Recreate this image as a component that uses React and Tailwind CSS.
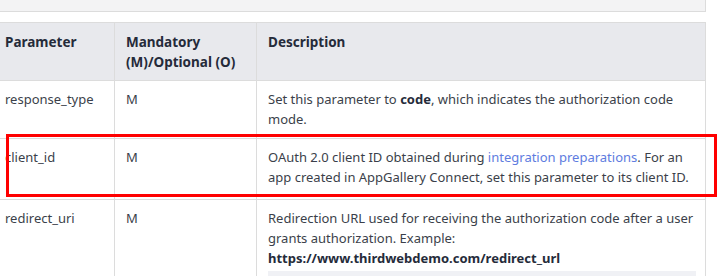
import React from "react";

const rows = [
  {
    name: "response_type",
    req: "M",
    desc: (
      <>
        <div>
          Set this parameter to <b className="font-bold text-[#252b3a]">code</b>, which indicates the authorization code
        </div>
        <div>mode.</div>
      </>
    ),
    pad: "pt-[8px] pb-[9px]",
  },
  {
    name: "client_id",
    req: "M",
    desc: (
      <>
        <div>
          OAuth 2.0 client ID obtained during{" "}
          <span className="text-[#5e7ce0]">integration preparations</span>. For an
        </div>
        <div>app created in AppGallery Connect, set this parameter to its client ID.</div>
      </>
    ),
    pad: "pt-[8px] pb-[12px]",
  },
  {
    name: "redirect_uri",
    req: "M",
    desc: (
      <>
        <div>Redirection URL used for receiving the authorization code after a user</div>
        <div>grants authorization. Example:</div>
        <div className="font-bold text-[#252b3a]">https://www.thirdwebdemo.com/redirect_url</div>
        <div className="mt-[3px] h-[30px] bg-[#f0f1f5] w-[428px]"></div>
      </>
    ),
    pad: "pt-[8px] pb-0",
  },
];

export default function App() {
  return (
    <div
      className="relative w-[722px] h-[276px] overflow-hidden bg-white text-[13px] leading-[20px] text-[#3b3f4a]"
      style={{ fontFamily: '"Noto Sans", "Open Sans", sans-serif' }}
    >
      <div className="ml-[-7px] w-[713px] h-[12px] bg-[#f3f3f4] border-b border-r border-[#dcdcdc]"></div>
      <div className="h-[10px]"></div>
      <div className="ml-[-7px] w-[713px] border-t border-r border-[#dcdcdc]">
        <div className="grid grid-cols-[122px_142px_449px] bg-[#e8e9ed] border-b border-[#dcdcdc] font-bold text-[#252b3a] text-[13.5px]">
          <div className="pl-[12px] pt-[9px] pb-[7px] h-[57px] border-r border-[#dcdcdc]">Parameter</div>
          <div className="pl-[11px] pt-[9px] pb-[7px] border-r border-[#dcdcdc]">
            <div>Mandatory</div>
            <div>(M)/Optional (O)</div>
          </div>
          <div className="pl-[11px] pt-[9px]">Description</div>
        </div>
        {rows.map((r, i) => (
          <div
            key={i}
            className={`grid grid-cols-[122px_142px_449px] ${i < rows.length - 1 ? "border-b border-[#dcdcdc]" : ""}`}
          >
            <div className={`pl-[12px] border-r border-[#dcdcdc] ${r.pad}`}>{r.name}</div>
            <div className={`pl-[11px] border-r border-[#dcdcdc] ${r.pad}`}>{r.req}</div>
            <div className={`pl-[11px] whitespace-nowrap ${r.pad}`}>{r.desc}</div>
          </div>
        ))}
      </div>
      <div className="absolute left-[6px] top-[134px] w-[711px] h-[63px] border-[3px] border-[#ff0000]"></div>
    </div>
  );
}
